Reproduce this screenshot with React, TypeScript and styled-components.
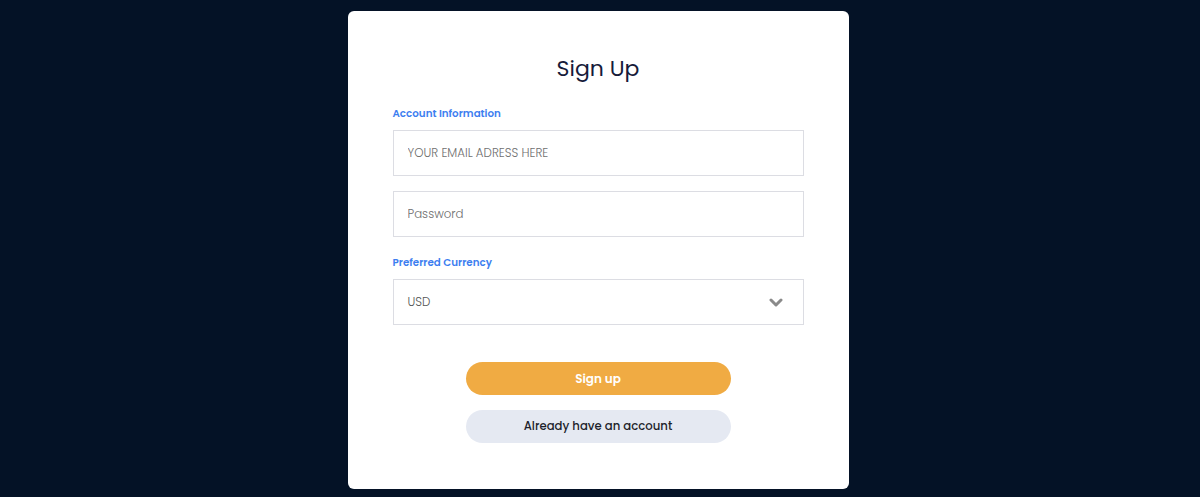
import React from 'react';
import styled, { createGlobalStyle } from 'styled-components';

const GlobalStyle = createGlobalStyle`
  html, body {
    margin: 0;
    padding: 0;
    background: #041226;
    font-family: 'Poppins', 'Inter', 'Noto Sans', sans-serif;
  }
`;

const Page = styled.div`
  min-height: 497px;
  display: flex;
  justify-content: center;
  align-items: flex-start;
  padding: 11px 4px 0 0;
  box-sizing: border-box;
`;

const Card = styled.form`
  width: 501px;
  box-sizing: border-box;
  background: #ffffff;
  border-radius: 6px;
  padding: 40px 45px 46px;
  display: flex;
  flex-direction: column;
`;

const Title = styled.h1`
  margin: 0 0 19px;
  font-size: 22px;
  line-height: 36px;
  font-weight: 400;
  color: #161b3a;
  text-align: center;
`;

const Label = styled.label<{ $top?: number }>`
  display: block;
  margin: ${(p) => p.$top ?? 0}px 0 8px;
  font-size: 10.3px;
  line-height: 16px;
  font-weight: 600;
  color: #3d7ef0;
`;

const Field = styled.input`
  display: block;
  width: 100%;
  height: 46px;
  box-sizing: border-box;
  border: 1px solid #dcdde3;
  padding: 1px 14px 0;
  font-family: inherit;
  font-size: 11.8px;
  font-weight: 300;
  color: #555;
  outline: none;
  margin-bottom: 15px;

  &::placeholder {
    color: #6f6f6f;
  }
`;

const Select = styled.div`
  display: flex;
  align-items: center;
  justify-content: space-between;
  height: 46px;
  box-sizing: border-box;
  border: 1px solid #dcdde3;
  padding: 1px 20px 0 14px;
  font-size: 11.8px;
  font-weight: 300;
  color: #555;
`;

const Actions = styled.div`
  margin-top: 37px;
  display: flex;
  flex-direction: column;
  align-items: center;
  gap: 15px;
`;

const Button = styled.button<{ $variant: 'primary' | 'ghost' }>`
  width: 265px;
  height: 33px;
  border: none;
  border-radius: 17px;
  font-family: inherit;
  font-size: ${(p) => (p.$variant === 'primary' ? 12 : 11.7)}px;
  font-weight: ${(p) => (p.$variant === 'primary' ? 600 : 500)};
  background: ${(p) => (p.$variant === 'primary' ? '#f0ab43' : '#e5e9f2')};
  color: ${(p) => (p.$variant === 'primary' ? '#ffffff' : '#1d1f2b')};
  cursor: pointer;
`;

const Chevron = () => (
  <svg width="14" height="10" viewBox="0 0 14 10">
    <path d="M2 2 L7 7 L12 2" fill="none" stroke="#8a8a8a" strokeWidth="3" strokeLinecap="round" strokeLinejoin="round" />
  </svg>
);

const App: React.FC = () => (
  <>
    <GlobalStyle />
    <Page>
      <Card onSubmit={(e) => e.preventDefault()}>
        <Title>Sign Up</Title>
        <Label>Account Information</Label>
        <Field type="email" placeholder="YOUR EMAIL ADRESS HERE" />
        <Field type="password" placeholder="Password" />
        <Label $top={3}>Preferred Currency</Label>
        <Select>
          <span>USD</span>
          <Chevron />
        </Select>
        <Actions>
          <Button $variant="primary" type="submit">Sign up</Button>
          <Button $variant="ghost" type="button">Already have an account</Button>
        </Actions>
      </Card>
    </Page>
  </>
);

export default App;
